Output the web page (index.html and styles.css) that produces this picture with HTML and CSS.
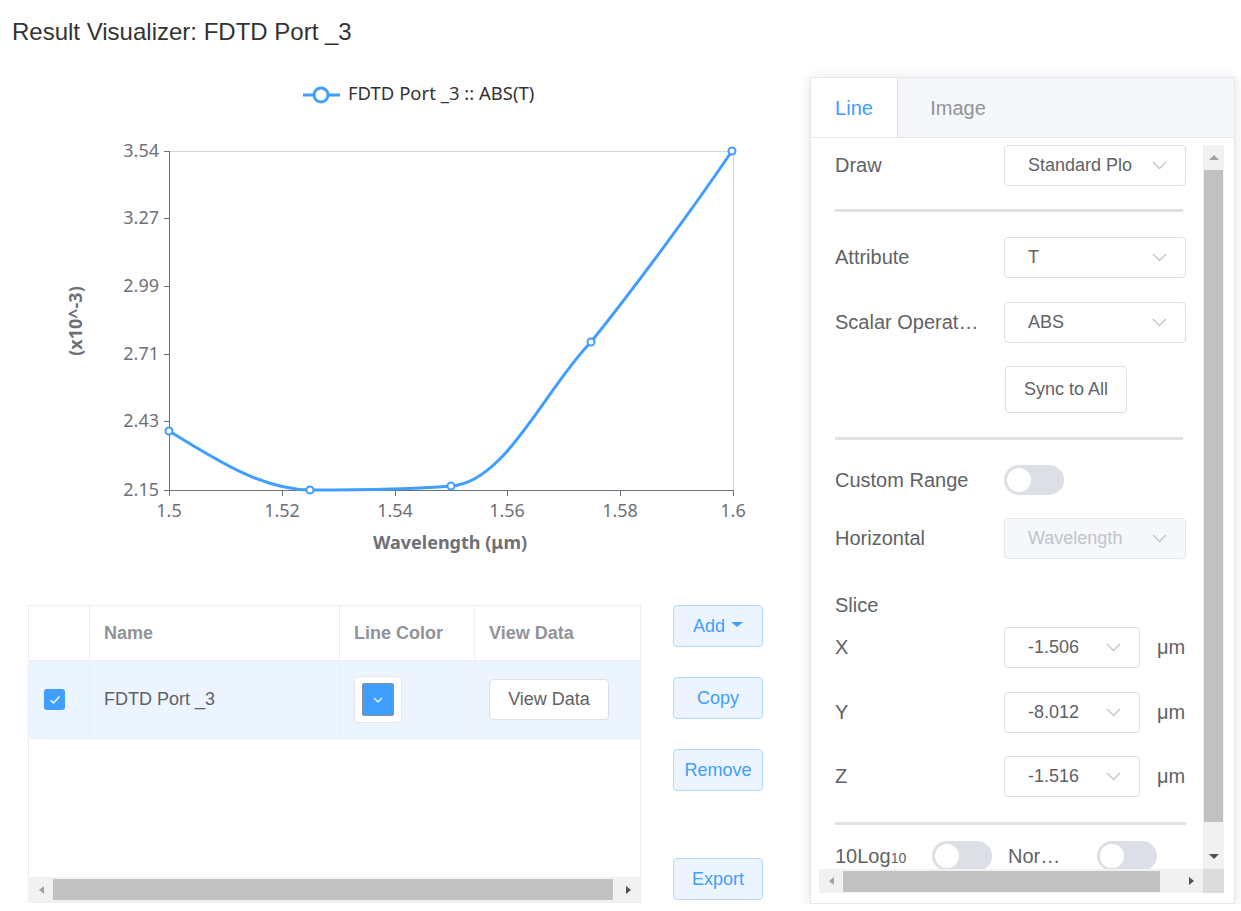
FILE: index.html
```html
<!DOCTYPE html>
<html>
<head>
<meta charset="utf-8">
<title>Result Visualizer</title>
<link rel="stylesheet" href="styles.css">
</head>
<body>
<div class="header">
  <h1 class="title">Result Visualizer: FDTD Port _3</h1>
</div>
<div class="main">
  <div class="left">
    <svg class="chart" width="810" height="528" viewBox="0 0 810 528">
      <line x1="303" y1="18" x2="340" y2="18" stroke="#409eff" stroke-width="3"/>
      <circle cx="321" cy="18" r="7" fill="#fff" stroke="#409eff" stroke-width="3"/>
      <text x="348" y="23" class="legend-text">FDTD Port _3 :: ABS(T)</text>

      <line x1="169" y1="74.5" x2="734" y2="74.5" stroke="#d4d4d4"/>
      <line x1="733.5" y1="74" x2="733.5" y2="413" stroke="#d4d4d4"/>
      <line x1="169.5" y1="74" x2="169.5" y2="414" stroke="#6e7079"/>
      <line x1="164" y1="413.5" x2="734" y2="413.5" stroke="#6e7079"/>
      <g stroke="#6e7079">
        <line x1="164" y1="74.5" x2="169" y2="74.5"/>
        <line x1="164" y1="141.5" x2="169" y2="141.5"/>
        <line x1="164" y1="209.5" x2="169" y2="209.5"/>
        <line x1="164" y1="277.5" x2="169" y2="277.5"/>
        <line x1="164" y1="344.5" x2="169" y2="344.5"/>
        <line x1="169.5" y1="413" x2="169.5" y2="419"/>
        <line x1="282.5" y1="413" x2="282.5" y2="419"/>
        <line x1="395.5" y1="413" x2="395.5" y2="419"/>
        <line x1="507.5" y1="413" x2="507.5" y2="419"/>
        <line x1="620.5" y1="413" x2="620.5" y2="419"/>
        <line x1="733.5" y1="413" x2="733.5" y2="419"/>
      </g>
      <g class="tick" text-anchor="end">
        <text x="159" y="80">3.54</text>
        <text x="159" y="147">3.27</text>
        <text x="159" y="215">2.99</text>
        <text x="159" y="283">2.71</text>
        <text x="159" y="350">2.43</text>
        <text x="159" y="419">2.15</text>
      </g>
      <g class="tick" text-anchor="middle">
        <text x="169" y="440">1.5</text>
        <text x="282" y="440">1.52</text>
        <text x="395" y="440">1.54</text>
        <text x="507" y="440">1.56</text>
        <text x="620" y="440">1.58</text>
        <text x="733" y="440">1.6</text>
      </g>
      <text class="axis-title" x="450" y="472" text-anchor="middle">Wavelength (μm)</text>
      <text class="axis-title" transform="translate(82 244) rotate(-90)" text-anchor="middle">(x10^-3)</text>

      <path d="M169,354 C216,383 263,413 310,413 C357,413 404,413 451,409 C505,406 545,312 591,265 C632,214 690,136 732,74" fill="none" stroke="#409eff" stroke-width="3"/>
      <g fill="#fff" stroke="#409eff" stroke-width="2">
        <circle cx="169" cy="354" r="3.5"/>
        <circle cx="310" cy="413" r="3.5"/>
        <circle cx="451" cy="409" r="3.5"/>
        <circle cx="591" cy="265" r="3.5"/>
        <circle cx="732" cy="74" r="3.5"/>
      </g>
    </svg>

    <div class="data-row">
      <div class="table">
        <div class="thead">
          <div class="cell"></div>
          <div class="cell">Name</div>
          <div class="cell">Line Color</div>
          <div class="cell last">View Data</div>
        </div>
        <div class="trow">
          <div class="cell">
            <span class="checkbox">
              <svg width="12" height="10" viewBox="0 0 12 10"><path d="M1.5 5 L4.5 8 L10.5 1.5" fill="none" stroke="#fff" stroke-width="1.4"/></svg>
            </span>
          </div>
          <div class="cell name">FDTD Port _3</div>
          <div class="cell">
            <span class="picker"><span class="picker-color">
              <svg width="10" height="6" viewBox="0 0 10 6"><path d="M1 1 L5 5 L9 1" fill="none" stroke="#fff" stroke-width="1.2"/></svg>
            </span></span>
          </div>
          <div class="cell last"><span class="btn-plain">View Data</span></div>
        </div>
        <div class="tbody-empty"></div>
        <div class="hbar table-hbar">
          <span class="arr arr-left dim"></span>
          <span class="hthumb table-thumb"></span>
          <span class="spacer"></span>
          <span class="arr arr-right"></span>
        </div>
      </div>
      <div class="actions">
        <button class="btn-action">Add <span class="caret"></span></button>
        <button class="btn-action gap">Copy</button>
        <button class="btn-action gap">Remove</button>
        <button class="btn-action export">Export</button>
      </div>
    </div>
  </div>

  <div class="panel">
    <div class="tabs">
      <div class="tab active">Line</div>
      <div class="tab image">Image</div>
    </div>
    <div class="panel-body">
      <div class="scroller">
        <div class="viewport">
          <div class="content">
            <div class="row">
              <div class="label">Draw</div>
              <div class="select"><span>Standard Plo</span><svg class="chev" width="15" height="9" viewBox="0 0 15 9"><path d="M1 1 L7.5 7.5 L14 1"/></svg></div>
            </div>
            <div class="divider d1"></div>
            <div class="row m25">
              <div class="label">Attribute</div>
              <div class="select"><span>T</span><svg class="chev" width="15" height="9" viewBox="0 0 15 9"><path d="M1 1 L7.5 7.5 L14 1"/></svg></div>
            </div>
            <div class="row m24">
              <div class="label">Scalar Operat…</div>
              <div class="select"><span>ABS</span><svg class="chev" width="15" height="9" viewBox="0 0 15 9"><path d="M1 1 L7.5 7.5 L14 1"/></svg></div>
            </div>
            <div class="sync-row">
              <button class="btn-plain sync">Sync to All</button>
            </div>
            <div class="divider d2"></div>
            <div class="row toggle-row">
              <div class="label">Custom Range</div>
              <div class="switch"><span class="knob"></span></div>
            </div>
            <div class="row m18">
              <div class="label">Horizontal</div>
              <div class="select disabled"><span>Wavelength</span><svg class="chev" width="15" height="9" viewBox="0 0 15 9"><path d="M1 1 L7.5 7.5 L14 1"/></svg></div>
            </div>
            <div class="row slice">
              <div class="label">Slice</div>
            </div>
            <div class="row m2">
              <div class="label">X</div>
              <div class="select small"><span>-1.506</span><svg class="chev" width="15" height="9" viewBox="0 0 15 9"><path d="M1 1 L7.5 7.5 L14 1"/></svg></div>
              <div class="unit">μm</div>
            </div>
            <div class="row m24">
              <div class="label">Y</div>
              <div class="select small"><span>-8.012</span><svg class="chev" width="15" height="9" viewBox="0 0 15 9"><path d="M1 1 L7.5 7.5 L14 1"/></svg></div>
              <div class="unit">μm</div>
            </div>
            <div class="row m23">
              <div class="label">Z</div>
              <div class="select small"><span>-1.516</span><svg class="chev" width="15" height="9" viewBox="0 0 15 9"><path d="M1 1 L7.5 7.5 L14 1"/></svg></div>
              <div class="unit">μm</div>
            </div>
            <div class="divider d3"></div>
            <div class="bottom-row">
              <div class="blabel">10Log<span class="sub">10</span></div>
              <div class="switch"><span class="knob"></span></div>
              <div class="blabel nor">Nor…</div>
              <div class="switch"><span class="knob"></span></div>
            </div>
          </div>
        </div>
        <div class="vbar">
          <span class="varr varr-up dim"></span>
          <span class="vthumb"></span>
          <span class="spacer"></span>
          <span class="varr varr-down"></span>
        </div>
        <div class="hbar panel-hbar">
          <span class="arr arr-left dim"></span>
          <span class="hthumb panel-thumb"></span>
          <span class="spacer"></span>
          <span class="arr arr-right"></span>
        </div>
        <div class="corner"></div>
      </div>
    </div>
  </div>
</div>
</body>
</html>
```

FILE: styles.css
```css
* { box-sizing: border-box; }

body {
  margin: 0;
  font-family: "Liberation Sans", Arial, sans-serif;
  color: #303133;
  background: #fff;
}

.header {
  height: 77px;
  padding: 18px 0 0 12px;
}

.title {
  margin: 0;
  font-size: 24px;
  font-weight: normal;
  line-height: 28px;
  color: #333;
}

.main {
  display: flex;
}

.left {
  width: 810px;
}

.chart {
  display: block;
}

.legend-text {
  font-family: "Noto Sans", sans-serif;
  font-size: 18.5px;
  fill: #333;
}

.tick text {
  font-family: "Noto Sans", sans-serif;
  font-size: 18px;
  fill: #6e7079;
}

.axis-title {
  font-family: "Noto Sans", sans-serif;
  font-size: 18px;
  font-weight: bold;
  fill: #6e7079;
}

/* table */
.data-row {
  display: flex;
  padding-left: 28px;
}

.table {
  width: 613px;
  height: 298px;
  border: 1px solid #ebeef5;
  display: flex;
  flex-direction: column;
}

.thead, .trow {
  display: grid;
  grid-template-columns: 61px 250px 135px 1fr;
}

.thead {
  height: 55px;
  border-bottom: 1px solid #ebeef5;
}

.thead .cell {
  font-size: 18px;
  font-weight: bold;
  color: #909399;
}

.cell {
  display: flex;
  align-items: center;
  padding-left: 14px;
  border-right: 1px solid #ebeef5;
}

.cell.last {
  border-right: none;
}

.trow {
  height: 78px;
  background: #ecf5ff;
  border-bottom: 1px solid #ebeef5;
}

.trow .cell {
  font-size: 18px;
  color: #606266;
}

.checkbox {
  width: 21px;
  height: 21px;
  margin-left: 1px;
  border-radius: 3px;
  background: #409eff;
  display: flex;
  align-items: center;
  justify-content: center;
}

.picker {
  width: 48px;
  height: 47px;
  border: 1px solid #e6e6e6;
  border-radius: 5px;
  background: #fff;
  display: flex;
  align-items: center;
  justify-content: center;
}

.picker-color {
  width: 32px;
  height: 33px;
  background: #409eff;
  border: 1px solid #8a8f99;
  border-radius: 2px;
  display: flex;
  align-items: center;
  justify-content: center;
}

.btn-plain {
  display: inline-flex;
  align-items: center;
  justify-content: center;
  width: 120px;
  height: 41px;
  border: 1px solid #dcdfe6;
  border-radius: 4px;
  background: #fff;
  color: #606266;
  font-family: "Liberation Sans", Arial, sans-serif;
  font-size: 18px;
  padding: 0;
}

.tbody-empty {
  flex: 1;
}

.hbar {
  display: flex;
  align-items: center;
  background: #f1f1f1;
}

.table-hbar {
  height: 25px;
}

.spacer {
  flex: 1;
}

.arr {
  width: 24px;
  display: flex;
  justify-content: center;
}

.arr::before {
  content: "";
  border-top: 4.5px solid transparent;
  border-bottom: 4.5px solid transparent;
}

.arr-left::before {
  border-right: 5px solid #505050;
}

.arr-right::before {
  border-left: 5px solid #505050;
}

.arr.dim.arr-left::before {
  border-right-color: #a3a3a3;
}

.hthumb {
  height: 21px;
  background: #c1c1c1;
}

.table-thumb {
  width: 560px;
}

.actions {
  margin-left: 32px;
  display: flex;
  flex-direction: column;
}

.btn-action {
  width: 90px;
  height: 42px;
  border: 1px solid #b3d8ff;
  border-radius: 4px;
  background: #ecf5ff;
  color: #409eff;
  font-family: "Liberation Sans", Arial, sans-serif;
  font-size: 18px;
  padding: 0;
  display: flex;
  align-items: center;
  justify-content: center;
}

.btn-action.gap {
  margin-top: 30px;
}

.btn-action.export {
  margin-top: 67px;
}

.caret {
  display: inline-block;
  margin-left: 6px;
  margin-bottom: 3px;
  border-left: 6px solid transparent;
  border-right: 6px solid transparent;
  border-top: 5px solid #409eff;
}

/* panel */
.panel {
  width: 425px;
  height: 827px;
  border: 1px solid #e4e7ed;
  box-shadow: 0 2px 12px 0 rgba(0, 0, 0, 0.12);
  background: #fff;
  display: flex;
  flex-direction: column;
}

.tabs {
  height: 60px;
  background: #f5f7fa;
  border-bottom: 1px solid #e4e7ed;
  display: flex;
}

.tab {
  display: flex;
  align-items: center;
  justify-content: center;
  padding-top: 2px;
  font-size: 20px;
  color: #909399;
}

.tab.active {
  width: 87px;
  background: #fff;
  color: #409eff;
  border-right: 1px solid #dcdfe6;
}

.tab.image {
  width: 120px;
}

.panel-body {
  padding: 7px 10px 9px 8px;
}

.scroller {
  display: grid;
  grid-template-columns: 384px 21px;
  grid-template-rows: 724px 24px;
}

.viewport {
  overflow: hidden;
}

.content {
  padding-left: 16px;
}

.row {
  display: flex;
  align-items: center;
  height: 41px;
}

.m25 { margin-top: 25px; }
.m24 { margin-top: 24px; }
.m23 { margin-top: 23px; }
.m18 { margin-top: 18px; }
.m2 { margin-top: 2px; }

.label {
  width: 169px;
  flex: none;
  font-size: 20px;
  color: #606266;
  white-space: nowrap;
}

.select {
  width: 182px;
  height: 41px;
  border: 1px solid #dcdfe6;
  border-radius: 4px;
  display: flex;
  align-items: center;
  justify-content: space-between;
  padding: 0 18px 0 23px;
  font-size: 18px;
  color: #606266;
}

.select.small {
  width: 136px;
}

.select.disabled {
  background: #f5f7fa;
  border-color: #e4e7ed;
  color: #c0c4cc;
}

.chev path {
  fill: none;
  stroke: #c0c4cc;
  stroke-width: 1.3;
}

.unit {
  margin-left: 17px;
  font-size: 20px;
  color: #606266;
}

.divider {
  height: 3px;
  width: 348px;
  background: #e4e0e0;
}

.d1 { margin-top: 23px; }
.d2 { margin-top: 24px; }
.d3 { margin-top: 25px; width: 351px; }

.sync-row {
  margin-top: 23px;
  padding-left: 170px;
}

.btn-plain.sync {
  width: 122px;
  height: 47px;
}

.toggle-row {
  margin-top: 20px;
  height: 40px;
}

.switch {
  width: 60px;
  height: 30px;
  border-radius: 15px;
  background: #dcdfe6;
  display: flex;
  align-items: center;
  padding: 0 3px;
  flex: none;
}

.knob {
  width: 24px;
  height: 24px;
  border-radius: 50%;
  background: #fff;
}

.slice {
  margin-top: 26px;
  height: 40px;
}

.bottom-row {
  margin-top: 16px;
  height: 30px;
  display: flex;
  align-items: center;
}

.blabel {
  width: 97px;
  font-size: 20px;
  color: #606266;
  white-space: nowrap;
}

.blabel .sub {
  font-size: 14px;
}

.blabel.nor {
  width: 89px;
  margin-left: 16px;
}

.vbar {
  background: #f1f1f1;
  display: flex;
  flex-direction: column;
  align-items: center;
}

.varr {
  height: 25px;
  display: flex;
  align-items: center;
}

.varr::before {
  content: "";
  border-left: 5px solid transparent;
  border-right: 5px solid transparent;
}

.varr-up::before {
  border-bottom: 5px solid #a3a3a3;
}

.varr-down::before {
  border-top: 5px solid #505050;
}

.vthumb {
  width: 19px;
  height: 652px;
  background: #c1c1c1;
}

.panel-hbar {
  height: 24px;
}

.panel-thumb {
  width: 317px;
}

.corner {
  background: #dcdcdc;
}
```
